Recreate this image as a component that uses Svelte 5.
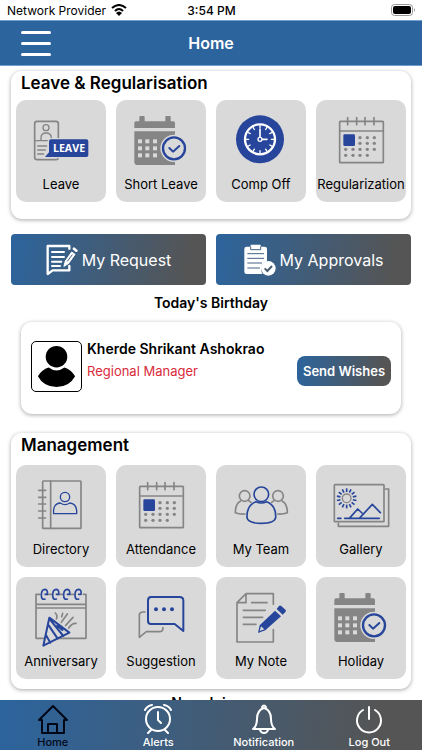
<script lang="ts">
	const leaveTiles = [
		{ label: 'Leave', icon: leave },
		{ label: 'Short Leave', icon: calendarCheck },
		{ label: 'Comp Off', icon: clock },
		{ label: 'Regularization', icon: calendar }
	];

	const managementTiles = [
		{ label: 'Directory', icon: directory },
		{ label: 'Attendance', icon: calendar },
		{ label: 'My Team', icon: team },
		{ label: 'Gallery', icon: gallery },
		{ label: 'Anniversary', icon: anniversary },
		{ label: 'Suggestion', icon: suggestion },
		{ label: 'My Note', icon: note },
		{ label: 'Holiday', icon: calendarCheck }
	];

	const tabs = [
		{ label: 'Home', icon: home, active: true },
		{ label: 'Alerts', icon: alarm, active: false },
		{ label: 'Notification', icon: bell, active: false },
		{ label: 'Log Out', icon: power, active: false }
	];

	const hours = Array.from({ length: 12 }, (_, i) => i * 30);
	const rays = Array.from({ length: 14 }, (_, i) => (i * 360) / 14);
	const dots = [
		[132, 113], [154, 113], [175, 113],
		[132, 130], [154, 130], [175, 130],
		[89, 148], [111, 148], [132, 148], [154, 148], [175, 148],
		[89, 166], [111, 166], [132, 166], [154, 166]
	];
</script>

<!-- tile icons, drawn on a 270 x 210 grid -->
{#snippet leave()}
	<rect class="grey" x="56" y="64" width="71" height="115" rx="7" />
	<circle class="grey thin" cx="90" cy="83" r="9" />
	<path class="grey thin" d="M75 122 V114 Q75 99 90 99 Q106 99 106 114 V122 M56 122 H110" />
	<path class="grey thin" d="M65 138 H92 M65 150 H88 M65 162 H83" />
	<path class="halo" d="M105 118 H211 Q217 118 217 124 V166 Q217 171 211 171 H87 L99 157 V124 Q99 118 105 118 Z" />
	<path class="blue-fill" d="M105 118 H211 Q217 118 217 124 V166 Q217 171 211 171 H87 L99 157 V124 Q99 118 105 118 Z" />
	<text x="159" y="156" class="banner">LEAVE</text>
{/snippet}

{#snippet calendarCheck()}
	<path class="grey-fill" d="M55 69 Q55 64 60 64 H70 V51 Q70 48 73 48 H83 Q86 48 86 51 V64 H148 V51 Q148 48 151 48 H161 Q164 48 164 51 V64 H172 Q177 64 177 69 V84 H55 Z" />
	<path class="grey-fill" d="M55 94 H177 V195 H65 Q55 195 55 185 Z" />
	{#each [118, 139, 160] as y}
		{#each [66, 88, 111] as x}
			<rect class="tile-fill" {x} {y} width="12" height="12" />
		{/each}
	{/each}
	<circle class="tile-fill" cx="174" cy="145" r="41" />
	<circle class="blue" cx="174" cy="145" r="33" stroke-width="7" />
	<path class="blue" d="M160 144 L171 155 L190 138" stroke-width="6" />
{/snippet}

{#snippet clock()}
	<circle class="blue-fill" cx="132" cy="118" r="72" />
	<circle class="white" cx="132" cy="118" r="45" stroke-width="7" />
	{#each hours as angle}
		<path class="white" d="M132 77 V84" stroke-width="4" transform="rotate({angle} 132 118)" />
	{/each}
	<path class="white" d="M132 88 V111 M139 118 H153" stroke-width="5" />
	<circle class="white" cx="132" cy="118" r="6" stroke-width="4" />
{/snippet}

{#snippet calendar()}
	<rect class="grey" x="71" y="64" width="131" height="124" rx="2" />
	<path class="grey" d="M71 93 H202 M95 53 V74 M122 53 V74 M147 53 V74 M174 53 V74" />
	<rect class="blue-fill" x="82" y="103" width="35" height="35" rx="4" />
	{#each dots as [cx, cy]}
		<circle class="grey-fill" {cx} {cy} r="5" />
	{/each}
{/snippet}

{#snippet directory()}
	<rect class="grey" x="80" y="48" width="115" height="142" rx="2" />
	<path class="grey" d="M104 48 V190 M68 76 H89 M68 97 H89 M68 117 H89 M68 138 H89 M68 159 H89" />
	<circle class="blue" cx="147" cy="96" r="14" stroke-width="4" />
	<path class="blue" d="M113 146 Q110 116 133 114 Q147 124 161 114 Q184 116 182 146 Z" stroke-width="4" />
{/snippet}

{#snippet team()}
	<circle class="grey" cx="86" cy="93" r="16" />
	<path class="grey" d="M74 108 C60 115 58 130 58 143 Q70 148 87 147 M98 107 L105 112" />
	<circle class="grey" cx="186" cy="93" r="16" />
	<path class="grey" d="M198 108 C212 115 214 130 214 143 Q202 148 185 147 M174 107 L167 112" />
	<circle class="blue" cx="136" cy="88" r="22" stroke-width="5" />
	<path class="blue" d="M120 110 C100 118 92 138 93 158 Q96 175 136 175 Q176 175 179 158 C180 138 172 118 152 110 Q136 118 120 110 Z" stroke-width="5" />
{/snippet}

{#snippet gallery()}
	<path class="grey" d="M208 72 H218 V184 H67 V175" />
	<rect class="grey" x="55" y="59" width="149" height="111" rx="2" />
	<circle class="grey thin" cx="92" cy="100" r="13" />
	{#each rays as angle}
		<path class="blue flat" d="M92 70 V81" stroke-width="5" transform="rotate({angle} 92 100)" />
	{/each}
	<path class="blue" d="M102 158 L125 132 L138 144 M130 160 L169 118 L193 143 M86 160 H190 M65 160 H75" stroke-width="5" />
{/snippet}

{#snippet anniversary()}
	<path class="grey" d="M72 52 H60 V184 H84 M126 184 H210 V52 H202 M60 82 H210 M60 93 H210 M92 52 H107 M126 52 H140 M159 52 H174" />
	{#each [84, 118, 151, 185] as x}
		<path class="blue" d="M{x + 3} 66 Q{x - 8} 70 {x - 8} 54 Q{x - 8} 37 {x + 3} 37 Q{x + 12} 38 {x + 10} 52 H{x + 3}" stroke-width="5" />
	{/each}
	<path class="blue" d="M100 122 L160 167 L82 206 Z M98 145 L125 185 M104 130 L142 177 M91 176 L103 197 M124 146 L139 159" stroke-width="6" />
	<path class="grey" d="M118 108 Q126 116 121 126 M154 111 L136 136 M171 121 L149 145 M180 139 Q168 138 158 153 M140 109 L137 119" />
{/snippet}

{#snippet suggestion()}
	<path class="grey" d="M87 105 H79 Q70 106 70 115 V181 L91 164 H132 Q141 163 141 152" />
	<path class="blue" d="M105 60 H191 Q202 60 202 71 V162 L176 141 H105 Q96 141 96 131 V71 Q96 60 105 60 Z" stroke-width="6" />
	<circle class="blue-fill" cx="120" cy="97" r="6" />
	<circle class="blue-fill" cx="144" cy="97" r="6" />
	<circle class="blue-fill" cx="168" cy="97" r="6" />
{/snippet}

{#snippet note()}
	<path class="grey" d="M172 82 V50 H90 L63 77 V195 H172 V158 M63 77 H90 V50" />
	<path class="grey" d="M107 77 H153 M82 100 H148 M82 121 H140 M82 142 H120" />
	<path class="halo" d="M126 168 L131 143 L180 100 L194 116 L148 159 Z" />
	<path class="blue-fill" d="M126 168 L131 145 L177 101 L195 118 L148 160 Z M182 96 L189 87 Q192 84 196 87 L209 99 Q211 102 208 105 L200 113 Z" />
	<path class="tile-fill" d="M131 162 L135 148 L145 157 Z" />
{/snippet}

<!-- tab bar icons, 30 x 30 -->
{#snippet home()}
	<path d="M1 16 L15 2 L29 16 H26 V29 H4 V16 Z M10 29 V20 H19 V29" />
{/snippet}

{#snippet alarm()}
	<circle cx="15" cy="15" r="12" />
	<path d="M15 8 V16 L18 19 M2 6 Q4 2 9 1 M28 6 Q26 2 21 1 M8 26 L5 29 M22 26 L25 29" />
{/snippet}

{#snippet bell()}
	<path d="M4 25 H26 Q22 22 22 15 Q22 6 15 4 Q8 6 8 15 Q8 22 4 25 Z M13 3 Q15 0 17 3 M11 26 Q12 29 15 29 Q18 29 19 26" />
{/snippet}

{#snippet power()}
	<path d="M15 3 V15 M9 6 A12 12 0 1 0 21 6" />
{/snippet}

{#snippet tile(item)}
	<button class="tile">
		<svg viewBox="0 0 270 210" aria-hidden="true">{@render item.icon()}</svg>
		<span>{item.label}</span>
	</button>
{/snippet}

<div class="app">
	<div class="status">
		<div class="carrier">
			Network Provider
			<svg width="16" height="12" viewBox="0 0 16 12" aria-label="Wi-Fi">
				<path d="M1 4 Q8 -2 15 4 M4 7 Q8 3 12 7" fill="none" stroke="#000" stroke-width="2" />
				<path d="M5 9 Q8 6 11 9 L8 12 Z" />
			</svg>
		</div>
		<time>3:54 PM</time>
		<svg class="battery" width="25" height="12" viewBox="0 0 25 12" aria-label="Battery full">
			<rect x="0.5" y="0.5" width="21" height="11" rx="3" fill="none" stroke="#999" />
			<rect x="2" y="2" width="18" height="8" rx="2" />
			<path d="M23 4 Q25 6 23 8 Z" fill="#999" />
		</svg>
	</div>

	<header>
		<button class="menu" aria-label="Menu"><i></i><i></i><i></i></button>
		<h1>Home</h1>
	</header>

	<main>
		<section class="card leave-card">
			<h2>Leave &amp; Regularisation</h2>
			<div class="tiles">
				{#each leaveTiles as item}
					{@render tile(item)}
				{/each}
			</div>
		</section>

		<div class="actions">
			<button>
				<svg width="32" height="32" viewBox="0 0 96 96" aria-hidden="true">
					<g fill="none" stroke="#fff" stroke-linejoin="round" stroke-linecap="round">
						<path d="M70 14 V6 H5 V90 L20 79 H70 V66" stroke-width="7" />
						<path d="M18 24 H54 M18 39 H54 M18 53 H46 M18 66 H42" stroke-width="6" />
						<path d="M54 66 L58 51 L77 24 L87 31 L68 58 Z" fill="#fff" stroke-width="3" />
						<path d="M84 14 L91 20" stroke-width="8" />
					</g>
					<path d="M64 52 L79 32" stroke="#446282" stroke-width="3" />
				</svg>
				My Request
			</button>
			<button>
				<svg width="32" height="32" viewBox="0 0 96 96" aria-hidden="true">
					<path d="M8 8 H20 V2 H50 V8 H62 Q69 8 69 15 V52 Q50 58 51 79 L55 90 H8 Q1 90 1 83 V15 Q1 8 8 8 Z" fill="#fff" />
					<path d="M20 8 V17 H50 V8 M10 29 H60 M10 43 H60 M10 57 H54 M10 72 H48" fill="none" stroke="#446282" stroke-width="3" />
					<circle cx="73" cy="73" r="22" fill="#fff" />
					<path d="M62 73 L70 81 L84 66" fill="none" stroke="#4a5c70" stroke-width="6" />
				</svg>
				My Approvals
			</button>
		</div>

		<h3>Today's Birthday</h3>

		<section class="card birthday">
			<svg class="avatar" viewBox="0 0 50 50" role="img" aria-label="Profile picture">
				<circle cx="25" cy="15" r="11" />
				<path d="M6 35 Q10 28 17 26 Q25 32 33 26 Q40 28 44 35 Q38 46 25 46 Q12 46 6 35 Z" />
			</svg>
			<div class="person">
				<strong>Kherde Shrikant Ashokrao</strong>
				<span>Regional Manager</span>
			</div>
			<button class="wish">Send Wishes</button>
		</section>

		<section class="card management">
			<h2>Management</h2>
			<div class="tiles">
				{#each managementTiles as item}
					{@render tile(item)}
				{/each}
			</div>
		</section>

		<h3 class="joinee">New Joinee</h3>
	</main>

	<nav>
		{#each tabs as tab}
			<button class:active={tab.active}>
				<svg viewBox="0 0 30 30" aria-hidden="true">{@render tab.icon()}</svg>
				<span>{tab.label}</span>
			</button>
		{/each}
	</nav>
</div>

<style>
	:global(body) {
		margin: 0;
		background: #fff;
	}

	.app {
		display: flex;
		flex-direction: column;
		height: 100vh;
		overflow: hidden;
		font-family: Inter, 'Liberation Sans', sans-serif;
		color: #000;
	}

	button {
		margin: 0;
		padding: 0;
		border: 0;
		background: none;
		font: inherit;
		color: inherit;
		cursor: pointer;
	}

	h1,
	h2,
	h3 {
		margin: 0;
	}

	.status {
		display: grid;
		grid-template-columns: 1fr auto 1fr;
		align-items: center;
		flex: none;
		height: 20px;
		padding: 0 6px 0 7px;
		font-size: 12px;
	}

	.carrier {
		display: flex;
		align-items: center;
		gap: 5px;
	}

	.status time {
		font-weight: 500;
	}

	.battery {
		justify-self: end;
	}

	header {
		display: grid;
		grid-template-columns: 1fr auto 1fr;
		align-items: center;
		flex: none;
		height: 46px;
		padding: 0 21px;
		box-sizing: border-box;
		border-top: 1px solid #6d9fd0;
		border-bottom: 1px solid #6d9fd0;
		background: #2c649d;
		color: #fff;
	}

	h1 {
		font-size: 16px;
		font-weight: 600;
	}

	.menu {
		display: flex;
		flex-direction: column;
		justify-self: start;
		gap: 8px;
		width: 30px;
	}

	.menu i {
		height: 3px;
		border-radius: 2px;
		background: #fff;
	}

	main {
		flex: 1;
		min-height: 0;
		overflow-y: auto;
		scrollbar-width: none;
		padding: 5px 11px 0;
	}

	.card {
		border-radius: 11px;
		background: #fff;
		box-shadow: 0 1px 4px rgba(0, 0, 0, 0.35);
	}

	.leave-card,
	.management {
		padding: 0 5px;
	}

	.leave-card {
		padding-bottom: 17px;
	}

	.management {
		margin-top: 19px;
		padding-bottom: 10px;
	}

	h2 {
		padding: 0 5px;
		font-size: 17px;
		font-weight: 600;
		line-height: 24px;
	}

	.tiles {
		display: grid;
		grid-template-columns: repeat(4, minmax(0, 1fr));
		gap: 10px;
		padding-top: 5px;
	}

	.management .tiles {
		padding-top: 8px;
	}

	.tile {
		display: flex;
		flex-direction: column;
		align-items: center;
		height: 102px;
		border-radius: 10px;
		background: #d9d9d9;
		font-size: 13px;
		line-height: 20px;
		white-space: nowrap;
	}

	.tile svg {
		width: 90px;
		height: 70px;
		margin-bottom: 4px;
	}

	.grey,
	.blue,
	.white {
		fill: none;
		stroke-linecap: round;
		stroke-linejoin: round;
	}

	.grey {
		stroke: #858585;
		stroke-width: 5;
	}

	.thin {
		stroke-width: 4;
	}

	.blue {
		stroke: #27459a;
	}

	.flat {
		stroke-linecap: butt;
	}

	.white {
		stroke: #fff;
	}

	.grey-fill {
		fill: #858585;
	}

	.blue-fill {
		fill: #27459a;
	}

	.tile-fill {
		fill: #d9d9d9;
	}

	.halo {
		fill: #d9d9d9;
		stroke: #d9d9d9;
		stroke-width: 8;
	}

	.banner {
		fill: #fff;
		font: 700 32px 'Open Sans', sans-serif;
		text-anchor: middle;
	}

	.actions {
		display: grid;
		grid-template-columns: 1fr 1fr;
		gap: 10px;
		margin-top: 15px;
	}

	.actions button {
		display: flex;
		align-items: center;
		justify-content: center;
		gap: 4px;
		height: 51px;
		border-radius: 4px;
		background: linear-gradient(100deg, #2c649d, #555 90%);
		color: #fff;
		font-size: 16px;
	}

	h3 {
		margin-top: 8px;
		font-size: 14px;
		font-weight: 600;
		line-height: 20px;
		text-align: center;
	}

	.birthday {
		display: flex;
		align-items: flex-start;
		gap: 5px;
		margin: 9px 10px 0;
		padding: 16px 10px;
		height: 92px;
		box-sizing: border-box;
	}

	.avatar {
		flex: none;
		box-sizing: border-box;
		width: 51px;
		height: 51px;
		margin-top: 3px;
		border: 1px solid #000;
		border-radius: 5px;
	}

	.person {
		display: flex;
		flex: 1;
		flex-direction: column;
		font-size: 13px;
		line-height: 22px;
		white-space: nowrap;
	}

	.person strong {
		font-size: 14px;
		font-weight: 600;
	}

	.person span {
		color: #d92b3a;
	}

	.wish {
		flex: none;
		width: 94px;
		height: 30px;
		margin-top: 18px;
		border-radius: 8px;
		background: linear-gradient(100deg, #2c649d, #555 90%);
		color: #fff;
		font-size: 13px;
		font-weight: 600;
		white-space: nowrap;
	}

	.joinee {
		margin-top: 4px;
	}

	nav {
		display: grid;
		grid-template-columns: repeat(4, 1fr);
		flex: none;
		height: 50px;
		background: linear-gradient(95deg, #2c649d, #555 90%);
		color: #fff;
		font-size: 11px;
		font-weight: 500;
	}

	nav button {
		display: flex;
		flex-direction: column;
		align-items: center;
		padding-top: 4px;
		line-height: 16px;
	}

	nav svg {
		width: 30px;
		height: 30px;
		fill: none;
		stroke: currentColor;
		stroke-width: 2;
		stroke-linecap: round;
		stroke-linejoin: round;
	}

	nav .active {
		color: #000818;
	}
</style>
